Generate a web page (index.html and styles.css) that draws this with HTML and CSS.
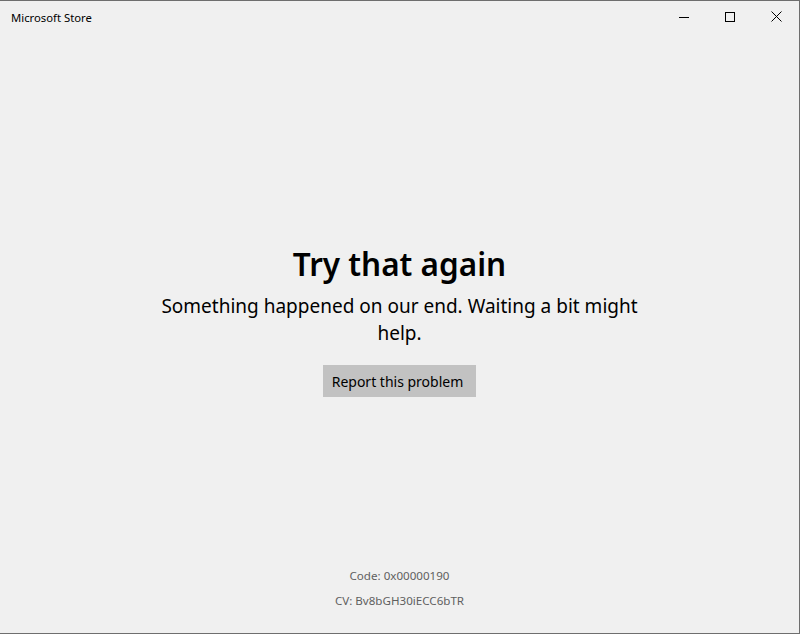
FILE: index.html
```html
<!DOCTYPE html>
<html lang="en">
<head>
<meta charset="utf-8">
<title>Microsoft Store</title>
<link rel="stylesheet" href="styles.css">
</head>
<body>
<div class="window">
  <header class="titlebar">
    <div class="app-title">Microsoft Store</div>
    <div class="controls">
      <div class="ctrl">
        <svg width="10" height="10" viewBox="0 0 10 10"><path d="M0 5.5H10" stroke="#000" stroke-width="1"/></svg>
      </div>
      <div class="ctrl">
        <svg width="10" height="10" viewBox="0 0 10 10"><rect x="0.5" y="0.5" width="9" height="9" fill="none" stroke="#000" stroke-width="1"/></svg>
      </div>
      <div class="ctrl">
        <svg width="11" height="11" viewBox="0 0 11 11"><path d="M0.5 0.5L10.5 10.5M10.5 0.5L0.5 10.5" stroke="#000" stroke-width="1"/></svg>
      </div>
    </div>
  </header>
  <main class="content">
    <div class="message">
      <h1 class="headline">Try that again</h1>
      <p class="detail">Something happened on our end. Waiting a bit might help.</p>
      <button class="report">Report this problem</button>
    </div>
  </main>
  <footer class="codes">
    <div class="code">Code: 0x00000190</div>
    <div class="code">CV: Bv8bGH30iECC6bTR</div>
  </footer>
</div>
</body>
</html>
```
FILE: styles.css
```css
html, body {
  margin: 0;
  padding: 0;
  background: #ffffff;
}
body {
  font-family: "Noto Sans", "Open Sans", sans-serif;
  color: #000;
}
.window {
  width: 799px;
  height: 632px;
  background: #f0f0f0;
  border-top: 1px solid #6e6e6e;
  border-right: 1px solid #6e6e6e;
  border-bottom: 1px solid #6e6e6e;
  display: flex;
  flex-direction: column;
}
.titlebar {
  height: 31px;
  display: flex;
  align-items: center;
  justify-content: space-between;
}
.app-title {
  padding-left: 11px;
  font-size: 11.3px;
  padding-top: 1px;
}
.controls {
  display: flex;
  height: 31px;
}
.ctrl {
  width: 46px;
  height: 31px;
  display: flex;
  align-items: center;
  justify-content: center;
}
.content {
  flex: 1;
  display: flex;
  justify-content: center;
  padding-top: 210px;
}
.message {
  width: 490px;
  display: flex;
  flex-direction: column;
  align-items: center;
  text-align: center;
}
.headline {
  margin: 0 0 7px;
  font-size: 31.5px;
  font-weight: 600;
  line-height: 44px;
}
.detail {
  margin: 0;
  font-size: 19px;
  line-height: 27px;
}
.report {
  margin-top: 18px;
  width: 153px;
  height: 32px;
  border: none;
  background: #c2c2c2;
  font-family: inherit;
  font-size: 14px;
  color: #000;
  padding: 0 4px 0 0;
}
.codes {
  display: flex;
  flex-direction: column;
  align-items: center;
  padding-bottom: 24px;
  gap: 8px;
}
.code {
  font-size: 11.6px;
  color: #5f5f5f;
  line-height: 17px;
}
```
